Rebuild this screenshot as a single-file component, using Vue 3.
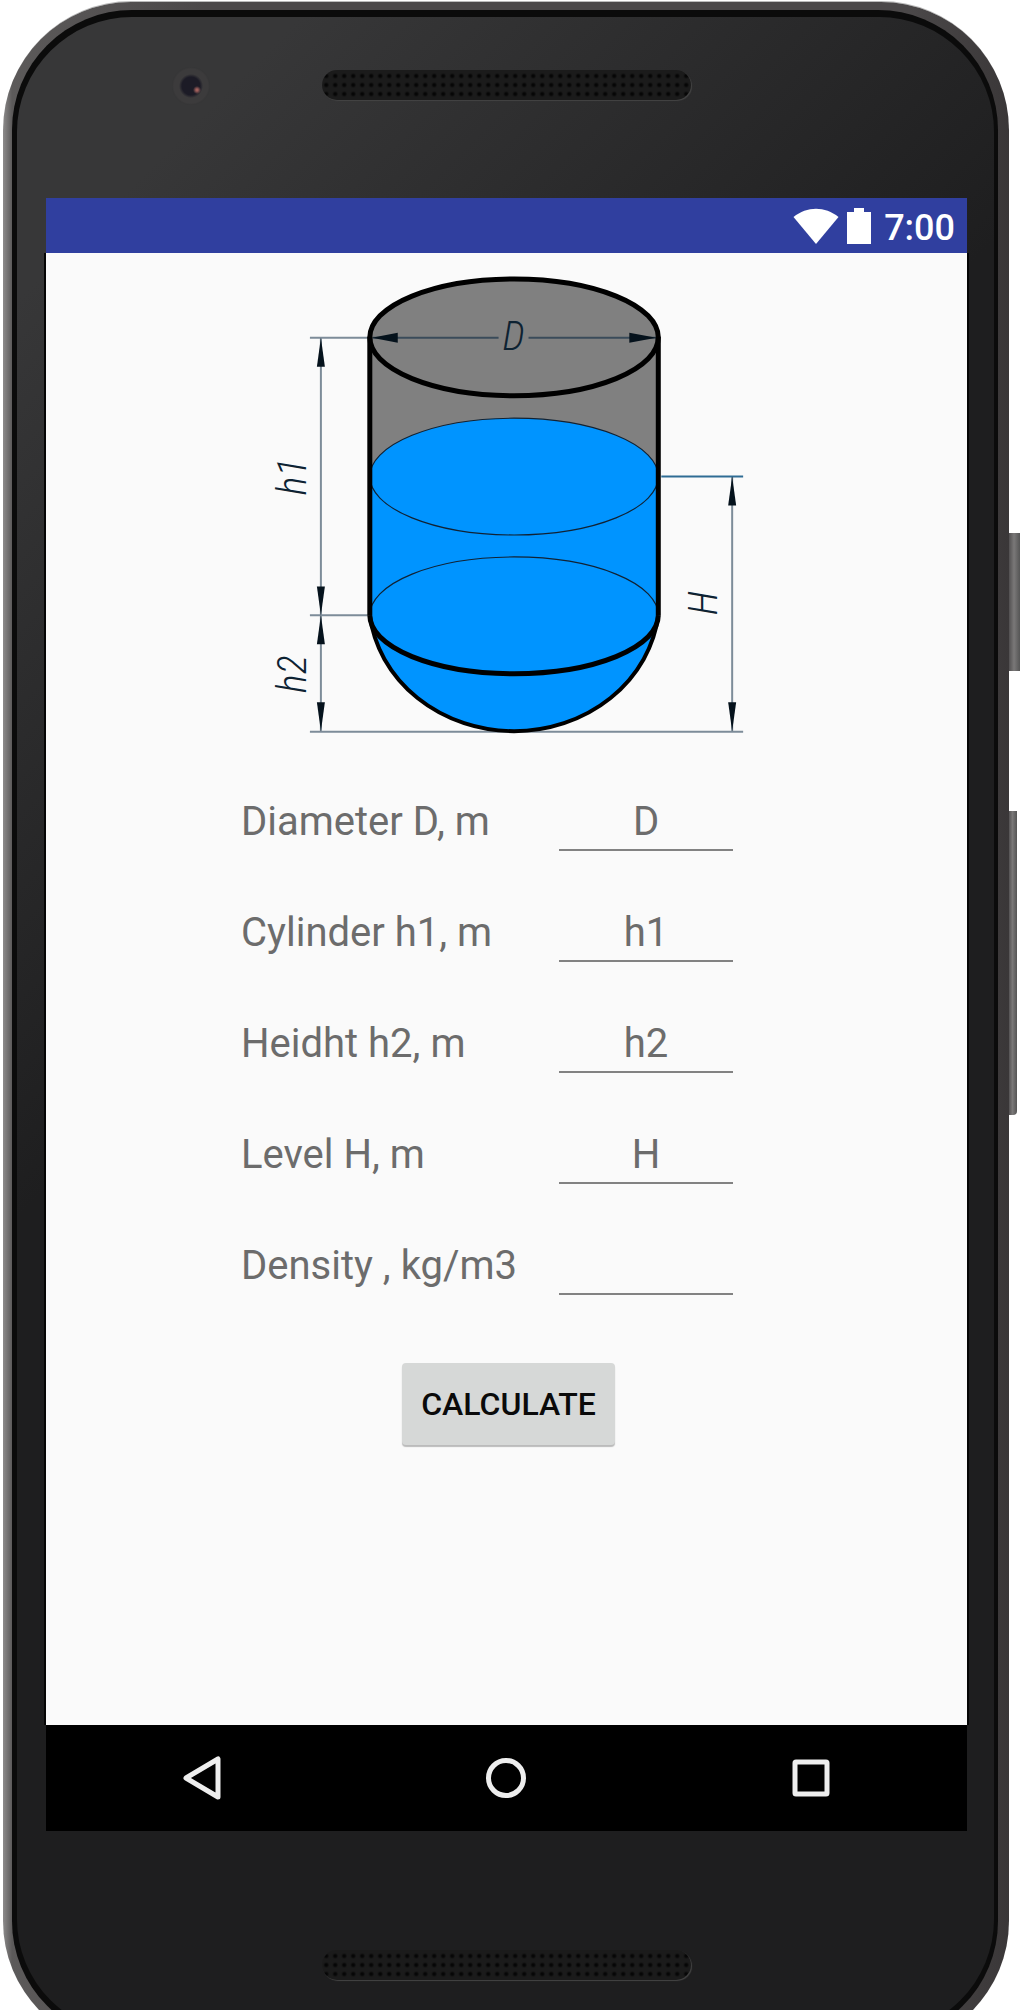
<template>
  <div class="page">
    <div class="side-button power"></div>
    <div class="side-button volume"></div>

    <div class="phone">
      <div class="rim">
        <div class="glass">
          <div class="forehead">
            <span class="camera"></span>
            <span class="speaker"></span>
          </div>

          <div class="screen">
            <header class="status-bar">
              <svg width="46" height="36" viewBox="0 0 46 36" aria-hidden="true">
                <path d="M0.5 9C14 -2 32 -2 45.500 9L23 36Z" fill="#fff" />
              </svg>
              <svg class="battery" width="26" height="36" viewBox="0 0 26 36" aria-hidden="true">
                <path d="M8 0h10v4h7v32H1V4h7z" fill="#fff" />
              </svg>
              <span class="clock">7:00</span>
            </header>

            <main class="content">
              <!-- Tank drawing -->
              <svg class="tank" viewBox="261 259 489 480" role="img" aria-label="Tank">
                <path d="M369 336V615H658V336Z" fill="#808080" />
                <ellipse cx="513.500" cy="336.500" rx="144.500" ry="58.500" fill="#808080" />
                <path d="M369 476A144.500 58.500 0 0 1 658 476V615A145.500 131.400 0 0 1 369 615Z" fill="#0094ff" />

                <g fill="none" stroke="#123" stroke-width="1.200">
                  <ellipse cx="513.500" cy="476" rx="144.500" ry="58.500" />
                  <path d="M369 615A144.500 58.500 0 0 1 658 615" />
                </g>

                <g fill="none" stroke="#7d8c99" stroke-width="2">
                  <path d="M309 337H367M309 615H367M309 731.500H743M320 337V731" />
                  <path d="M732 476V731" />
                  <path d="M661 476H743" stroke="#2f6c94" />
                  <path d="M372 337H498M528 337H656" stroke="#3a4b5a" />
                </g>

                <g fill="none" stroke="#000" stroke-width="5">
                  <ellipse cx="513.500" cy="336.500" rx="144.500" ry="58.500" />
                  <path d="M369 336V615M658 336V615" />
                  <path d="M369 615A144.500 58.500 0 0 0 658 615" />
                  <path d="M369 615A145.500 131.400 0 0 0 658 615" stroke-width="4" />
                </g>

                <path v-for="arrow in arrows" :key="arrow" :d="arrow" fill="#05121c" />

                <text x="513" y="349" text-anchor="middle">D</text>
                <text transform="translate(305 476) rotate(-90)" text-anchor="middle">h1</text>
                <text transform="translate(305 674) rotate(-90)" text-anchor="middle">h2</text>
                <text transform="translate(717 603) rotate(-90)" text-anchor="middle">H</text>
              </svg>

              <form class="form" @submit.prevent>
                <div v-for="field in fields" :key="field.id" class="row">
                  <label :for="field.id">{{ field.label }}</label>
                  <input :id="field.id" v-model="values[field.id]" type="text" inputmode="decimal"
                    :placeholder="field.hint" />
                </div>
                <button type="submit" class="calculate">CALCULATE</button>
              </form>
            </main>

            <nav class="nav-bar">
              <button type="button" aria-label="Back">
                <svg width="48" height="48" viewBox="0 0 48 48">
                  <path d="M8 24L40 5V43Z" />
                </svg>
              </button>
              <button type="button" aria-label="Home">
                <svg width="48" height="48" viewBox="0 0 48 48">
                  <circle cx="24" cy="24" r="17.500" />
                </svg>
              </button>
              <button type="button" aria-label="Recent apps">
                <svg width="48" height="48" viewBox="0 0 48 48">
                  <rect x="8" y="8" width="32" height="32" rx="1" />
                </svg>
              </button>
            </nav>
          </div>

          <div class="chin">
            <span class="speaker"></span>
          </div>
        </div>
      </div>
    </div>
  </div>
</template>

<script setup>
import { reactive } from 'vue';

const fields = [
  { id: 'diameter', label: 'Diameter D, m', hint: 'D' },
  { id: 'cylinder', label: 'Cylinder h1, m', hint: 'h1' },
  { id: 'height', label: 'Heidht h2, m', hint: 'h2' },
  { id: 'level', label: 'Level H, m', hint: 'H' },
  { id: 'density', label: 'Density , kg/m3', hint: '' }
];

const values = reactive({
  diameter: '',
  cylinder: '',
  height: '',
  level: '',
  density: ''
});

// Arrow heads of the dimension lines
const arrows = [
  'M320 337L316 366H324Z',
  'M320 615L316 586H324Z',
  'M320 615L316 644H324Z',
  'M320 731L316 702H324Z',
  'M732 476L728 505H736Z',
  'M732 731L728 702H736Z',
  'M371 337L397 332V342Z',
  'M656 337L629 332V342Z'
];
</script>

<style>
body {
  margin: 0;
  background: #fff;
}
</style>

<style scoped>
.page {
  position: relative;
  box-sizing: border-box;
  height: 100vh;
  overflow: hidden;
  padding: 2px 11px 0 3px;
  font-family: Roboto, "Liberation Sans", sans-serif;
}

.phone {
  position: relative;
  box-sizing: border-box;
  display: flex;
  min-height: calc(100vh + 37px);
  padding: 8px 11px 8px 9px;
  border-radius: 128px;
  background: linear-gradient(90deg, #8d8b8b 0, #5c5a5a 9px, #4b4849 20%, #4b4849 90%, #3a3738 100%);
  box-shadow: 0 -2px 0 -1px #bbb;
}

.rim {
  flex: 1;
  display: flex;
  padding: 7px 4px 7px 5px;
  border-radius: 120px;
  background: #0b0b0b;
}

.glass {
  flex: 1;
  display: flex;
  flex-direction: column;
  padding: 0 27px 0 29px;
  border-radius: 115px;
  background: linear-gradient(135deg, #373738 200px, #1e1e1f 850px);
}

.forehead {
  position: relative;
  height: 181px;
  display: flex;
  justify-content: center;
  align-items: flex-start;
  padding-top: 53px;
  box-sizing: border-box;
}

.camera {
  position: absolute;
  top: 50px;
  left: 126px;
  width: 38px;
  height: 38px;
  border-radius: 50%;
  background:
    radial-gradient(circle at 25px 23px, #a0605c 0, #a0605c 1px, transparent 4px),
    radial-gradient(circle, #1c1b26 0, #1c1b26 9px, #3c3b3c 12px, #3c3b3c 17px, #353536 19px);
}

.speaker {
  width: 40%;
  height: 30px;
  border-radius: 15px;
  background: radial-gradient(circle, #050505 0, #050505 1px, #1b1b1b 3px) center / 9px 9px #1b1b1b;
  box-shadow: 1px 1px 1px #444;
}

.side-button {
  position: absolute;
  right: 0;
  background: linear-gradient(90deg, #4a4849, #7a7878 50%, #555);
}

.power {
  top: 533px;
  width: 12px;
  height: 138px;
}

.volume {
  top: 811px;
  right: 3px;
  width: 9px;
  height: 304px;
  border-radius: 0 0 4px 0;
}

.screen {
  flex: 1;
  display: flex;
  flex-direction: column;
  background: #fafafa;
}

.status-bar {
  display: flex;
  align-items: center;
  justify-content: flex-end;
  height: 55px;
  padding-right: 12px;
  background: #303f9f;
  color: #fff;
}

.battery {
  margin: 0 12px 0 7px;
}

.clock {
  padding-top: 4px;
  font-size: 36px;
  line-height: 40px;
  font-weight: 500;
}

.content {
  flex: 1;
  display: flex;
  flex-direction: column;
  align-items: center;
  padding-top: 7px;
  box-shadow: -2px 0 0 #050505, 2px 0 0 #050505;
}

.tank {
  width: 53%;
}

.tank text {
  font-family: "Roboto Condensed", "Liberation Sans Narrow", Roboto, sans-serif;
  font-size: 40px;
  font-style: italic;
  font-weight: 300;
  fill: #0d2232;
}

.form {
  align-self: stretch;
  display: flex;
  flex-direction: column;
  padding: 27px 0 0 195px;
}

.row {
  display: flex;
  align-items: center;
  height: 111px;
}

.row label {
  width: 318px;
  font-size: 40px;
  line-height: 44px;
  color: #6c6c6c;
}

.row input {
  box-sizing: border-box;
  width: 174px;
  height: 58px;
  padding: 2px 0 0;
  border: 0;
  border-bottom: 2px solid #828282;
  background: none;
  font-family: inherit;
  font-size: 40px;
  text-align: center;
  color: #222;
}

.row input::placeholder {
  color: #6c6c6c;
  opacity: 1;
}

.row input:focus {
  outline: none;
  border-color: #303f9f;
}

.calculate {
  align-self: flex-start;
  width: 213px;
  height: 82px;
  margin: 42px 0 0 161px;
  padding: 0;
  border: 0;
  border-radius: 4px;
  background: #d6d8d7;
  box-shadow: 0 2px 1px #bbb;
  font-family: inherit;
  font-size: 32px;
  font-weight: 500;
  color: #0a0a0a;
  cursor: pointer;
}

.nav-bar {
  display: flex;
  height: 106px;
  padding: 0 4px;
  background: #000;
}

.nav-bar button {
  flex: 1;
  display: flex;
  align-items: center;
  justify-content: center;
  padding: 0;
  border: 0;
  background: none;
}

.nav-bar svg {
  fill: none;
  stroke: #eee;
  stroke-width: 5;
  stroke-linejoin: round;
}

.chin {
  display: flex;
  justify-content: center;
  align-items: flex-start;
  height: 203px;
  padding-top: 119px;
  box-sizing: border-box;
}
</style>
